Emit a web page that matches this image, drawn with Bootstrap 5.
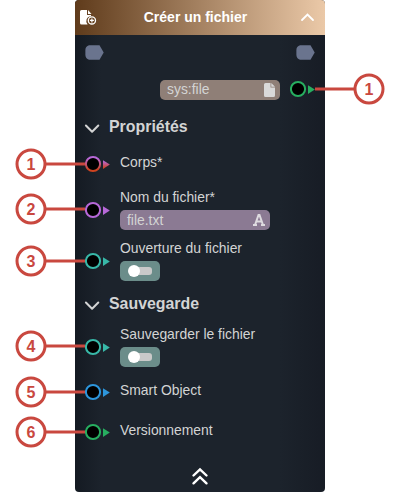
<!DOCTYPE html>
<html lang="fr">
<head>
<meta charset="utf-8">
<meta name="viewport" content="width=device-width, initial-scale=1">
<title>Créer un fichier</title>
<link href="https://cdn.jsdelivr.net/npm/bootstrap@5.3.0/dist/css/bootstrap.min.css" rel="stylesheet">
<style>
body{font-family:"Liberation Sans",Arial,sans-serif;font-size:13.9px;line-height:20px;color:#d3d4d4;background:#fff}
svg{display:block;flex:none}
.node{width:250px;height:492px;border-radius:4px;background:linear-gradient(90deg,#141a22 0,#1c232c 26px,#1c232c 205px,#171c25 250px)}
.node-head{height:35px;padding:0 10px 0 5px;border-radius:4px 4px 0 0;background:linear-gradient(90deg,#5f3b1b,#ebc9a8);color:#fff;font-size:14px}
.node-head strong{margin-left:-7px;line-height:35px;height:35px}
.tabs-row{height:45px;padding:10px 10px 0}
.out-row{height:20px;padding-right:10px;margin-bottom:15px;gap:10px}
.field{height:20px;line-height:19px;border-radius:5px;padding:0 5px 0 7px}
.field-file{width:120px;background:#8f7f77}
.field-file span{margin-top:-1px}
.field-text{width:150px;background:#8b7a93;margin-top:3px}
.section-title{height:24px;padding-left:9px;gap:9px;font-size:15.900px;font-weight:700}
.port-row{padding-left:10px;gap:10px}
.r-corps{height:45px}.r-name{height:51px}.r-open{height:52px}.r-save{height:48px}.r-small{height:40px}
.toggle{width:40px;height:20px;border-radius:5px;background:#6b8d8a;margin-top:3px}
.callout-mark{position:absolute;left:-61px}
.callout-right{position:absolute;left:239px;top:-7px}
.callout-mark text,.callout-right text{font:700 16px "Liberation Sans",Arial,sans-serif;fill:#c9483f;text-anchor:middle}
</style>
<script src="https://cdn.jsdelivr.net/npm/bootstrap@5.3.0/dist/js/bootstrap.bundle.min.js"></script>
</head>
<body>
<svg width="0" height="0" class="position-absolute" aria-hidden="true">
<defs>
<linearGradient id="mix" x1="0" y1="0" x2="0" y2="1"><stop offset=".1" stop-color="#b768d8"/><stop offset=".9" stop-color="#cf431f"/></linearGradient>
<symbol id="port" viewBox="0 0 26 18"><circle cx="8" cy="9" r="7.1" fill="#000" stroke-width="2"/><path d="M18 5.300v8.600l6.800-4.300z" stroke="none"/></symbol>
<symbol id="down" viewBox="0 0 16 10"><path d="M1.900 1.500 8.100 7.700l6.200-6.200" fill="none" stroke="currentColor" stroke-width="2" stroke-linecap="round" stroke-linejoin="round"/></symbol>
<symbol id="tab" viewBox="0 0 19 15"><path d="M4 .3h10.500L18.700 7.500 14.500 14.700H4Q.4 13.500.4 10V5Q.4 1.500 4 .3z" fill="#6a748e"/></symbol>
<symbol id="switch" viewBox="0 0 25 12"><rect x="5" y="2" width="19" height="8" rx="3" fill="#c9c9c9"/><circle cx="6" cy="6" r="6" fill="#fff"/></symbol>
<symbol id="ring" viewBox="0 0 73 34"><path d="M31 17h40" stroke="#c9483f" stroke-width="3"/><circle cx="17" cy="17" r="14" fill="#fff" stroke="#c9483f" stroke-width="3"/></symbol>
</defs>
</svg>
<main class="node mx-auto d-flex flex-column position-relative">
<header class="node-head d-flex align-items-center justify-content-between">
<svg width="18" height="17" viewBox="0 0 18 17"><path d="M1.500 1H7v5h4v1.200a5 5 0 0 0-3.400 8.400H1.500Q0 15.500 0 14V2.500Q0 1 1.500 1zM8 1l3.500 4H8z" fill="#fff"/><circle cx="11.900" cy="11.400" r="3.600" fill="none" stroke="#fff" stroke-width="1.300"/><path d="M11.900 9.400v4M9.900 11.400h4" stroke="#fff" stroke-width="1.200"/></svg>
<strong>Créer un fichier</strong>
<svg width="15" height="10" viewBox="0 0 15 10"><path d="M2 7l5.500-5.500L13 7" fill="none" stroke="#fff" stroke-width="1.800" stroke-linecap="round"/></svg>
</header>
<div class="tabs-row d-flex justify-content-between"><svg width="19" height="15"><use href="#tab"/></svg><svg width="19" height="15"><use href="#tab"/></svg></div>
<div class="out-row d-flex justify-content-end align-items-center position-relative">
<div class="field field-file d-flex align-items-center justify-content-between"><span>sys:file</span><svg width="11" height="14" viewBox="0 0 11 14"><path d="M1.500 0H6.500v4.500H11v8q0 1.500-1.500 1.500h-8Q0 14 0 12.500v-11Q0 0 1.500 0zM7.300 0 11 3.700H7.300z" fill="#d9d9d9"/></svg></div>
<svg width="25" height="18" class="position-relative" style="top:-1px" stroke="#27ae60" fill="#27ae60"><use href="#port" width="26" height="18"/></svg>
<svg class="callout-right" width="73" height="34"><path d="M1 16h40" stroke="#c9483f" stroke-width="3"/><circle cx="55" cy="16" r="14" fill="#fff" stroke="#c9483f" stroke-width="3"/><text x="55" y="22">1</text></svg>
</div>
<div class="section-title d-flex align-items-center"><svg class="mt-1" width="16" height="10"><use href="#down"/></svg><span>Propriétés</span></div>
<div class="port-row r-corps d-flex position-relative" style="margin-top:3px">
<svg width="25" height="18" style="margin-top:13px" stroke="url(#mix)" fill="url(#mix)"><use href="#port" width="26" height="18"/></svg><label style="margin-top:10px">Corps*</label>
<svg class="callout-mark" style="top:5px" width="73" height="34"><use href="#ring"/><text x="17" y="23">1</text></svg>
</div>
<div class="port-row r-name d-flex position-relative">
<svg width="25" height="18" style="margin-top:14px" stroke="#b768d8" fill="#b768d8"><use href="#port" width="26" height="18"/></svg><div><label class="d-block">Nom du fichier*</label><div class="field field-text d-flex align-items-center justify-content-between"><span>file.txt</span><svg width="12" height="12" viewBox="0 0 12 12"><path d="M0 11h4M8 11h4M2 11 5.500 1h1L10 11M3.500 7.500h5" fill="none" stroke="#dedbe0" stroke-width="2"/></svg></div></div>
<svg class="callout-mark" style="top:5px" width="73" height="34"><use href="#ring"/><text x="17" y="23">2</text></svg>
</div>
<div class="port-row r-open d-flex position-relative">
<svg width="25" height="18" style="margin-top:14px" stroke="#38b8a8" fill="#38b8a8"><use href="#port" width="26" height="18"/></svg><div><label class="d-block">Ouverture du fichier</label><div class="toggle d-flex align-items-center justify-content-center"><svg width="25" height="12"><use href="#switch"/></svg></div></div>
<svg class="callout-mark" style="top:6px" width="73" height="34"><use href="#ring"/><text x="17" y="23">3</text></svg>
</div>
<div class="section-title d-flex align-items-center" style="margin-top:2px"><svg class="mt-1" width="16" height="10"><use href="#down"/></svg><span>Sauvegarde</span></div>
<div class="port-row r-save d-flex position-relative" style="margin-top:8px">
<svg width="25" height="18" style="margin-top:14px" stroke="#38b8a8" fill="#38b8a8"><use href="#port" width="26" height="18"/></svg><div><label class="d-block">Sauvegarder le fichier</label><div class="toggle d-flex align-items-center justify-content-center"><svg width="25" height="12"><use href="#switch"/></svg></div></div>
<svg class="callout-mark" style="top:5px" width="73" height="34"><use href="#ring"/><text x="17" y="23">4</text></svg>
</div>
<div class="port-row r-small d-flex position-relative">
<svg width="25" height="18" style="margin-top:11px" stroke="#2d96dc" fill="#2d96dc"><use href="#port" width="26" height="18"/></svg><label style="margin-top:8px">Smart Object</label>
<svg class="callout-mark" style="top:3px" width="73" height="34"><use href="#ring"/><text x="17" y="23">5</text></svg>
</div>
<div class="port-row r-small d-flex position-relative">
<svg width="25" height="18" style="margin-top:11px" stroke="#27ae60" fill="#27ae60"><use href="#port" width="26" height="18"/></svg><label style="margin-top:8px">Versionnement</label>
<svg class="callout-mark" style="top:3px" width="73" height="34"><use href="#ring"/><text x="17" y="23">6</text></svg>
</div>
<footer class="mt-auto d-flex justify-content-center" style="padding-bottom:7px"><svg width="18" height="18" viewBox="0 0 18 18"><path d="M2.500 8.500 9 2.300 15.500 8.500M2.500 16.300 9 10.100 15.500 16.300" fill="none" stroke="#fff" stroke-width="2.400" stroke-linecap="round"/></svg></footer>
</main>
</body>
</html>
